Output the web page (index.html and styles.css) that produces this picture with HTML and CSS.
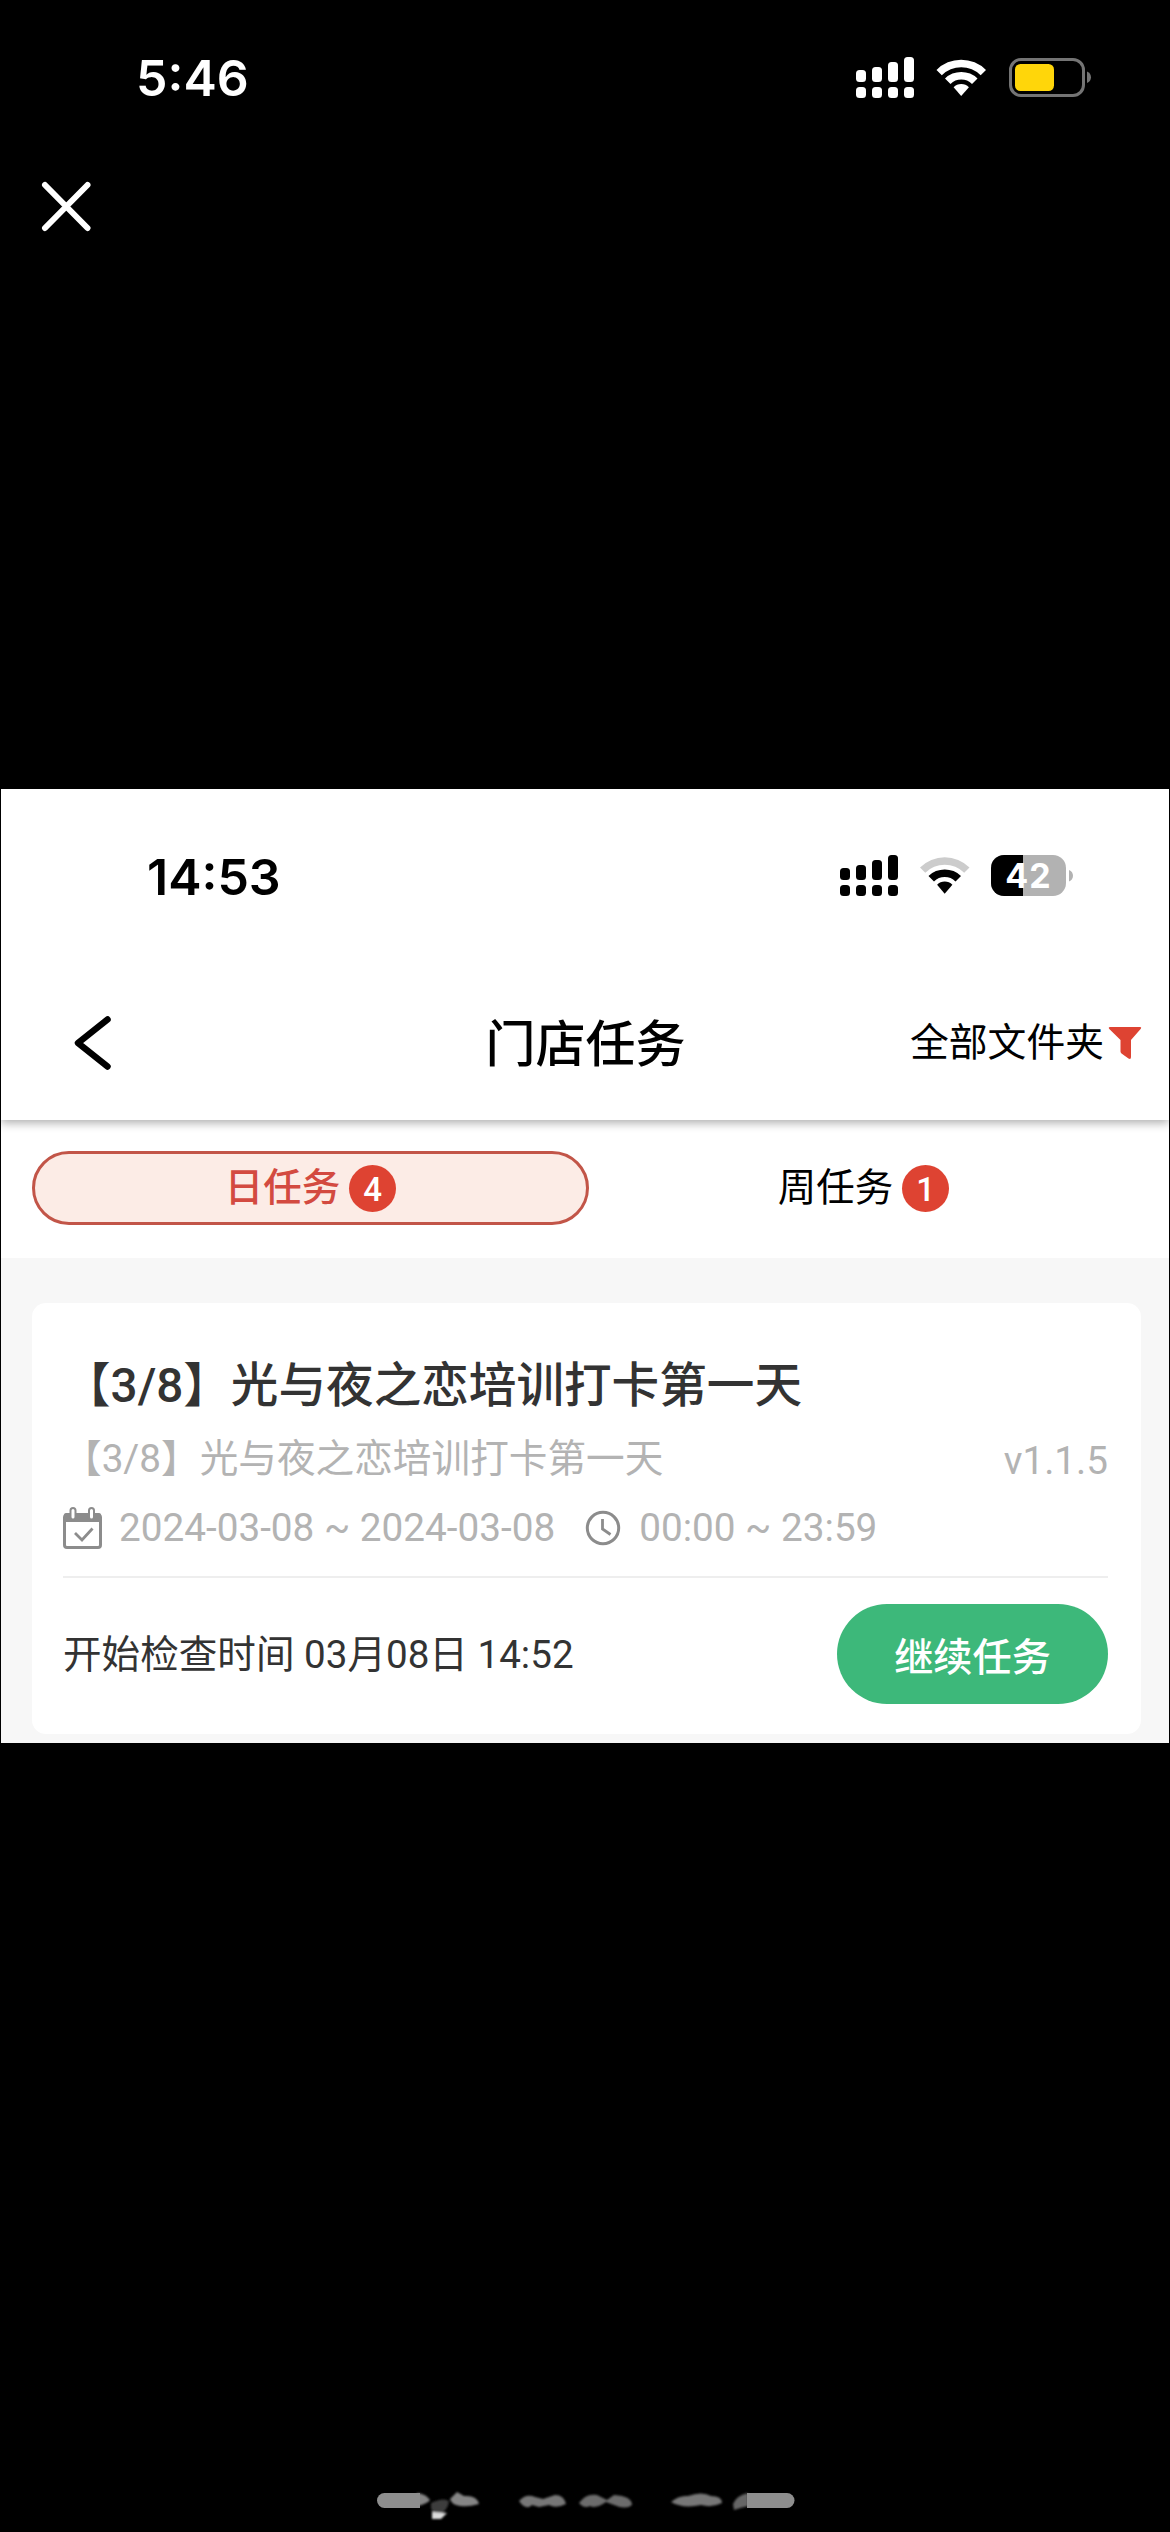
FILE: index.html
```html
<!DOCTYPE html>
<html lang="zh-CN">
<head>
<meta charset="utf-8">
<title>门店任务</title>
<link rel="stylesheet" href="styles.css">
</head>
<body>
<header class="viewer-bar">
  <div class="status status-outer">
    <span class="clock">5:46</span>
    <svg class="status-icons" width="236" height="42" viewBox="0 0 236 42">
      <g fill="#fff">
        <rect x="0" y="14" width="10" height="12" rx="3.5"/><rect x="16" y="11" width="10" height="15" rx="3.5"/>
        <rect x="32" y="6" width="10" height="20" rx="3.5"/><rect x="48" y="1" width="10" height="25" rx="3.5"/>
        <rect x="0" y="31" width="10" height="11" rx="3.5"/><rect x="16" y="31" width="10" height="11" rx="3.5"/>
        <rect x="32" y="31" width="10" height="11" rx="3.5"/><rect x="48" y="31" width="10" height="11" rx="3.5"/>
        <path d="M80.500 14a35 35 0 0 1 49.500 0l-5.300 5.200a27.500 27.500 0 0 0-38.900 0z"/>
        <path d="M89 22.600a23 23 0 0 1 32.500 0l-5.500 5.400a15.300 15.300 0 0 0-21.500 0z"/>
        <path d="M97.600 31.200a10.800 10.800 0 0 1 15.300 0l-7.700 8.800z"/>
      </g>
      <rect x="154.500" y="3.500" width="73" height="36" rx="10.500" fill="none" stroke="#747474" stroke-width="3"/>
      <rect x="159" y="8" width="39" height="27" rx="5.500" fill="#ffd60a"/>
      <path d="M231 15.500c5.300 2 5.300 9.500 0 11.500z" fill="#747474"/>
    </svg>
  </div>
  <svg class="close" width="52" height="52" viewBox="0 0 52 52" fill="none" stroke="#fff" stroke-width="6" stroke-linecap="round"><path d="M5 5l42.500 43M47.500 5L5 48"/></svg>
</header>

<main class="app">
  <section class="app-header">
    <div class="status status-inner">
      <span class="clock">14:53</span>
      <svg class="status-icons" width="234" height="42" viewBox="0 0 234 42">
        <rect x="0" y="13" width="10" height="12" rx="3.500"/><rect x="16" y="10" width="10" height="15" rx="3.500"/>
        <rect x="32" y="5" width="10" height="20" rx="3.500"/><rect x="48" y="0" width="10" height="25" rx="3.500"/>
        <rect x="0" y="30" width="10" height="11" rx="3.500"/><rect x="16" y="30" width="10" height="11" rx="3.500"/>
        <rect x="32" y="30" width="10" height="11" rx="3.500"/><rect x="48" y="30" width="10" height="11" rx="3.500"/>
        <path d="M80 12.500a35 35 0 0 1 49.500 0l-5.300 5.200a27.500 27.500 0 0 0-38.900 0z" fill="#ccc"/>
        <path d="M88.500 21.100a23 23 0 0 1 32.500 0l-5.500 5.400a15.300 15.300 0 0 0-21.500 0z"/>
        <path d="M97.100 29.700a10.800 10.800 0 0 1 15.300 0l-7.700 9z"/>
        <rect x="151" y="0" width="75" height="41" rx="13" fill="#b2b2b2"/>
        <path d="M183 0h-19a13 13 0 0 0-13 13v15a13 13 0 0 0 13 13h19z"/>
        <path d="M229 15c5.300 2 5.300 9.500 0 11.500z" fill="#b2b2b2"/>
        <text class="battery-level" x="188.500" y="33" text-anchor="middle">42</text>
      </svg>
    </div>
    <nav class="nav">
      <svg class="back" width="42" height="62" viewBox="0 0 42 62" fill="none" stroke="#000" stroke-width="6.500" stroke-linecap="round" stroke-linejoin="round"><path d="M35.500 7.500L6 31l29.500 23.500"/></svg>
      <h1 class="nav-title">门店任务</h1>
      <div class="filter">
        <span>全部文件夹</span>
        <svg width="34" height="34" viewBox="0 0 34 34"><path d="M2 1h30q2 0 .6 2L23 14v17q0 3-2.500 1.600l-7-5.200q-1-.8-1-2V14L1.300 3Q0 1 2 1z" fill="#de4332"/></svg>
      </div>
    </nav>
  </section>

  <section class="tabs">
    <div class="tab tab-active"><span>日任务</span><b class="badge">4</b></div>
    <div class="tab"><span>周任务</span><b class="badge">1</b></div>
  </section>

  <article class="card">
    <h2 class="card-title">【3/8】光与夜之恋培训打卡第一天</h2>
    <div class="card-sub"><span class="sub-name">【3/8】光与夜之恋培训打卡第一天</span><span class="version">v1.1.5</span></div>
    <div class="meta">
      <svg class="calendar" width="40" height="44" viewBox="0 0 40 44">
        <rect x="1.500" y="9" width="36" height="32.500" rx="2.500" fill="#fff" stroke="#8c8c8c" stroke-width="3"/>
        <path d="M1 16V9q0-2 2-2h33q2 0 2 2v7z" fill="#8c8c8c"/>
        <rect x="7.500" y="2" width="5" height="11.500" rx="2.500" fill="#fff" stroke="#8c8c8c" stroke-width="2"/>
        <rect x="26" y="2" width="5" height="11.500" rx="2.500" fill="#fff" stroke="#8c8c8c" stroke-width="2"/>
        <path d="M12 27l7 7 10.500-11.500" fill="none" stroke="#8c8c8c" stroke-width="2.800"/>
      </svg>
      <span class="date">2024-03-08 ~ 2024-03-08</span>
      <svg class="time-icon" width="36" height="36" viewBox="0 0 36 36" fill="none" stroke="#8c8c8c"><circle cx="18" cy="18" r="15.700" stroke-width="3"/><path d="M17.500 9v10l8 5.500" stroke-width="2.800"/></svg>
      <span class="time">00:00 ~ 23:59</span>
    </div>
    <footer class="card-foot">
      <span class="started">开始检查时间 03月08日 14:52</span>
      <button class="continue">继续任务</button>
    </footer>
  </article>
</main>

<svg class="home" width="420" height="36" viewBox="0 0 420 36">
  <defs><filter id="soft" x="-5%" y="-30%" width="110%" height="160%"><feGaussianBlur stdDeviation="1.100"/></filter></defs>
  <g filter="url(#soft)" fill="#858585">
    <path d="M40 5q9 1 13 7-3 4-13 6z"/>
    <path d="M54 15q12-6 18-2-1 11-13 15-6-4-5-13z" fill="#3c3c3c"/>
    <path d="M55 24l15 1-6 6H55z" fill="#ddd"/>
    <path d="M73 11l7-7 7 4q13-1 15 8-14 4-23 1-4-1-6-6z"/>
    <path d="M142 13q7-8 16-4l8 2 12-4q9 0 11 9-10 5-17 1l-10 2-7-2q-6 6-13-4z" fill="#777"/>
    <path d="M202 15q7-10 18-8l10 5 7-5q18 1 18 10-6 5-18 0l-8-3q-10 7-16 4-6 3-11-3z" fill="#6c6c6c"/>
    <path d="M294 14q8-7 17-6 14-5 23 0 11 0 11 7-10 5-21 2-18 4-30-3z" fill="#777"/>
    <path d="M356 16q4-9 15-11v13q-8 2-14 4z" fill="#666"/>
  </g>
  <path d="M43 5H7.500a7.500 7.500 0 0 0 0 15H43z" fill="#8e8e8e"/>
  <path d="M370 5h40a7.500 7.500 0 0 1 0 15h-40z" fill="#8e8e8e"/>
</svg>
</body>
</html>
```
FILE: styles.css
```css
* { box-sizing: border-box; }

body {
  margin: 0;
  width: 1170px;
  height: 2532px;
  display: flex;
  flex-direction: column;
  background: #000;
  color: #000;
  font-family: Roboto, "Noto Sans CJK SC", sans-serif;
}

svg { display: block; flex: none; }
h1, h2 { margin: 0; font-weight: 500; }

.viewer-bar { height: 789px; flex: none; }

.status {
  display: flex;
  justify-content: space-between;
  align-items: flex-start;
}
.status-outer { padding: 56px 78px 0 136px; height: 180px; color: #fff; }
.status-inner { padding: 66px 95px 0 146px; height: 194px; }

.clock {
  font: 600 50px/44px Inter, sans-serif;
}

.close { margin-left: 40px; }

.battery-level {
  font: 700 34px Inter, sans-serif;
  fill: #fff;
  letter-spacing: 1px;
}

.app {
  width: 1168px;
  height: 954px;
  margin: 0 1px;
  flex: none;
  background: #f7f7f7;
  overflow: hidden;
}

.app-header {
  position: relative;
  height: 331px;
  background: #fff;
  box-shadow: 0 3px 9px rgba(0, 0, 0, .32);
}

.nav {
  display: grid;
  grid-template-columns: 1fr auto 1fr;
  align-items: center;
  height: 120px;
  padding: 0 27px 0 71px;
}
.nav-title {
  font-size: 50px;
  line-height: 60px;
  margin-right: 43px;
  padding-top: 4px;
}
.filter {
  display: flex;
  align-items: center;
  justify-content: flex-end;
  gap: 4px;
  font-size: 38.800px;
  line-height: 50px;
}

.tabs {
  display: grid;
  grid-template-columns: 557px 549px;
  height: 138px;
  padding: 31px 0 0 31px;
  background: #fff;
}
.tab {
  display: flex;
  align-items: center;
  justify-content: center;
  gap: 9px;
  height: 74px;
  font-size: 38.500px;
  line-height: 50px;
}
.tab-active {
  background: #fcece6;
  border: 3px solid #c25548;
  border-radius: 37px;
  color: #d34a40;
  font-weight: 500;
}
.badge {
  width: 47px;
  height: 47px;
  border-radius: 50%;
  background: #de4332;
  color: #fff;
  font: 500 33px/50px Roboto, sans-serif;
  text-align: center;
}

.card {
  width: 1109px;
  height: 431px;
  margin: 45px 0 0 31px;
  padding: 52px 33px 0 31px;
  background: #fff;
  border-radius: 14px;
}
.card-title {
  font-size: 47.600px;
  line-height: 62px;
  color: #333;
  white-space: nowrap;
}
.card-sub {
  display: flex;
  justify-content: space-between;
  align-items: center;
  height: 84px;
  font-size: 38.650px;
  line-height: 50px;
  color: #b3b3b3;
}
.version { padding-top: 3px; }
.meta {
  display: flex;
  align-items: center;
  height: 54px;
  font-size: 38.700px;
  line-height: 46px;
  color: #b3b3b3;
}
.date { margin-left: 16px; }
.time-icon { margin-left: 30px; }
.time { margin-left: 18px; }

.card-foot {
  display: flex;
  justify-content: space-between;
  align-items: center;
  margin-top: 21px;
  padding-top: 26px;
  border-top: 2px solid #eee;
  font-size: 38.600px;
  color: #333;
}
.started { padding-bottom: 7px; }
.continue {
  width: 271px;
  height: 100px;
  padding: 0;
  border: 0;
  border-radius: 50px;
  background: #3db87a;
  color: #fff;
  font: 500 39.200px/50px "Noto Sans CJK SC", sans-serif;
}

.home { margin: auto 0 8px 377px; }
```
